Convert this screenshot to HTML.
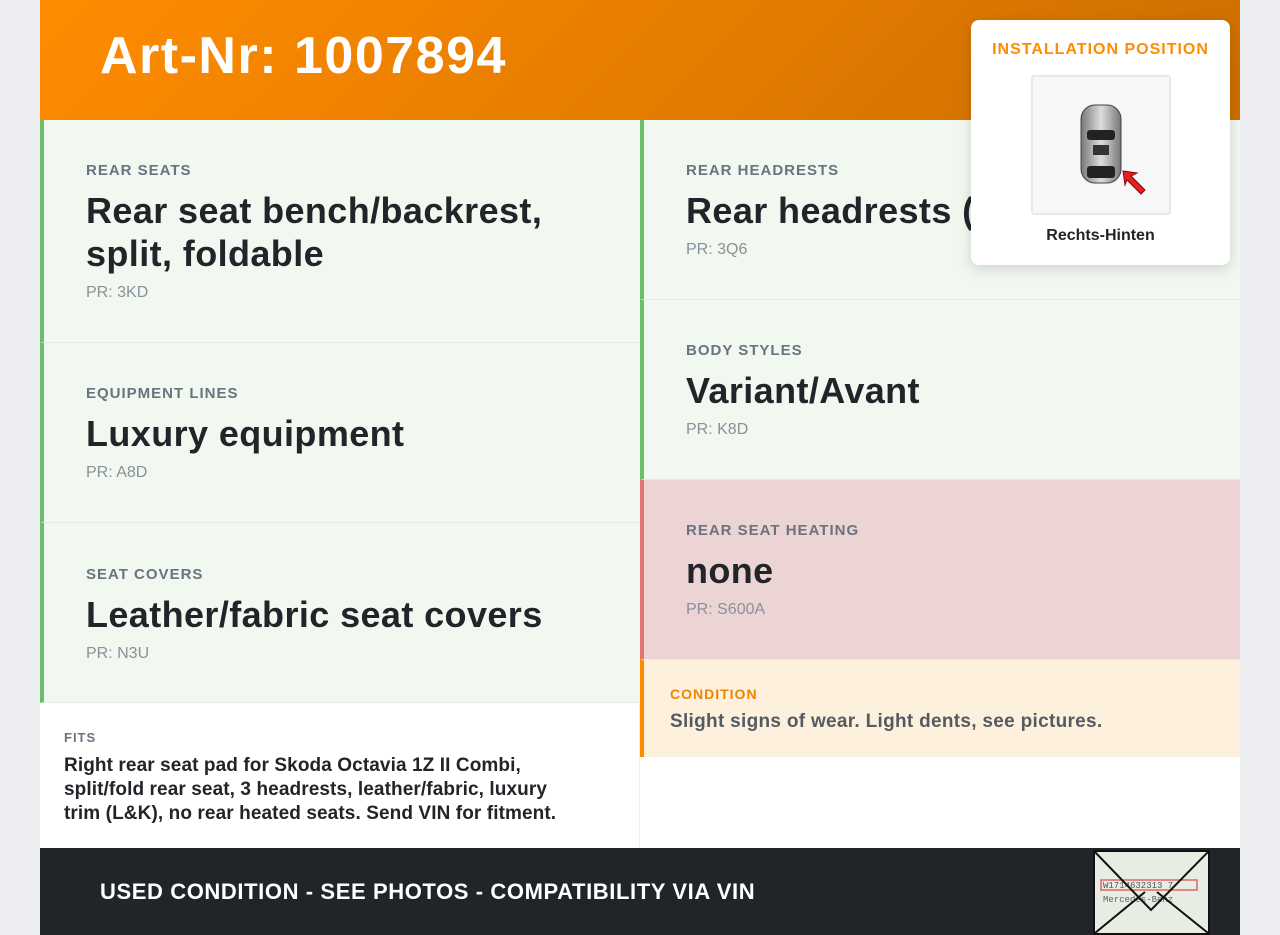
<!DOCTYPE html>
<html><head><meta charset="utf-8"><style>
*{box-sizing:border-box;margin:0;padding:0}
body{width:1280px;height:935px;background:#eceef1;font-family:"Liberation Sans",sans-serif;color:#212529;overflow:hidden;position:relative}
.wrap{position:absolute;left:40px;top:0;width:1200px;height:935px;background:#fff;overflow:hidden}
.hdr{height:120px;background:linear-gradient(135deg,#ff8c00,#cc6e00);padding-left:60px;color:#fff;font-size:52px;font-weight:bold;line-height:112px;letter-spacing:1.5px}
.cell{position:absolute;background:#f1f8f0;border-left:4px solid #6cbf6a;padding-left:42px;border-bottom:1px solid #e3ebe2}
.lbl{font-size:15px;letter-spacing:1px;color:#6b7280;font-weight:bold;text-transform:uppercase}
.ttl{font-size:36px;font-weight:bold;line-height:43px;margin-top:10px;color:#212529;letter-spacing:.4px}
.pr{font-size:16px;color:#8a9099;margin-top:9px}
.foot{position:absolute;left:0;top:848px;width:1200px;height:87px;background:#212529;color:#fff;font-size:22px;font-weight:bold;line-height:87px;padding-left:60px;letter-spacing:.6px}
.pop{position:absolute;left:971px;top:20px;width:259px;height:245px;background:#fff;border-radius:8px;box-shadow:0 4px 14px rgba(0,0,0,.15);text-align:center}
</style></head><body>
<div class="wrap">
<div class="hdr">Art-Nr: 1007894</div>
<div class="cell" style="left:0;top:120px;width:600px;height:223px;padding-top:42px"><div class="lbl">Rear seats</div><div class="ttl">Rear seat bench/backrest,<br>split, foldable</div><div class="pr">PR: 3KD</div></div>
<div class="cell" style="left:0;top:343px;width:600px;height:180px;padding-top:42px"><div class="lbl">Equipment lines</div><div class="ttl">Luxury equipment</div><div class="pr">PR: A8D</div></div>
<div class="cell" style="left:0;top:523px;width:600px;height:180px;padding-top:43px"><div class="lbl">Seat covers</div><div class="ttl">Leather/fabric seat covers</div><div class="pr">PR: N3U</div></div>
<div style="position:absolute;left:0;top:703px;width:600px;height:145px;padding:27px 24px;border-right:1px solid #eee"><div style="font-size:13px;letter-spacing:1px;color:#6b7280;font-weight:bold">FITS</div><div style="font-size:19px;font-weight:bold;line-height:24px;margin-top:9px;color:#212529;width:520px;letter-spacing:.1px">Right rear seat pad for Skoda Octavia 1Z II Combi, split/fold rear seat, 3 headrests, leather/fabric, luxury trim (L&amp;K), no rear heated seats. Send VIN for fitment.</div></div>
<div class="cell" style="left:600px;top:120px;width:600px;height:180px;padding-top:42px"><div class="lbl">Rear headrests</div><div class="ttl">Rear headrests (3)</div><div class="pr">PR: 3Q6</div></div>
<div class="cell" style="left:600px;top:300px;width:600px;height:180px;padding-top:42px"><div class="lbl">Body styles</div><div class="ttl">Variant/Avant</div><div class="pr">PR: K8D</div></div>
<div class="cell" style="left:600px;top:480px;width:600px;height:180px;padding-top:42px;background:#ecd4d4;border-left-color:#e57373"><div class="lbl">Rear seat heating</div><div class="ttl">none</div><div class="pr">PR: S600A</div></div>
<div class="cell" style="left:600px;top:660px;width:600px;height:97px;padding:26px 26px;background:#fdf0dc;border-left-color:#ff8c00;border-bottom:none"><div style="font-size:14px;letter-spacing:1px;color:#f08400;font-weight:bold">CONDITION</div><div style="font-size:19px;font-weight:bold;color:#555b62;margin-top:9px;letter-spacing:.3px">Slight signs of wear. Light dents, see pictures.</div></div>
<div class="foot">USED CONDITION - SEE PHOTOS - COMPATIBILITY VIA VIN</div>
<div style="position:absolute;left:1053px;top:850px;width:117px;height:85px;background:#e8ede4;border:2px solid #111">
<svg width="113" height="81" viewBox="0 0 113 81"><rect x="6" y="28" width="96" height="10" fill="none" stroke="#d66" stroke-width="1.5"/><text x="8" y="36" font-size="9" fill="#555" font-family="Liberation Mono">W1714632313 7</text><text x="8" y="50" font-size="9" fill="#666" font-family="Liberation Mono">Mercedes-Benz</text><path d="M0 0 L56 58 L113 0 M0 81 L50 40 M113 81 L62 40" stroke="#111" stroke-width="2" fill="none"/></svg></div>
</div>
<div class="pop">
<div style="font-size:16px;font-weight:bold;color:#ff8c00;letter-spacing:1px;margin-top:21px">INSTALLATION POSITION</div>
<div style="width:140px;height:140px;margin:16px auto 0;background:#f6f7f9;border:2px solid #e6e8eb;border-radius:3px;position:relative">
<svg width="140" height="140" viewBox="0 0 140 140" style="position:absolute;left:-2px;top:-2px"><defs><linearGradient id="g" x1="0" x2="1"><stop offset="0" stop-color="#777"/><stop offset=".5" stop-color="#ddd"/><stop offset="1" stop-color="#777"/></linearGradient></defs><rect x="50" y="30" width="40" height="78" rx="14" fill="url(#g)" stroke="#444"/><rect x="56" y="55" width="28" height="10" rx="3" fill="#222"/><rect x="62" y="70" width="16" height="10" fill="#333"/><rect x="56" y="91" width="28" height="12" rx="3" fill="#222"/><path d="M96 105 l14 14 l4 -4 l-14 -14 l6 -3 l-14 -2 l2 14z" fill="#d22" stroke="#900"/></svg></div>
<div style="font-size:16px;font-weight:bold;margin-top:12px;color:#212529">Rechts-Hinten</div>
</div>
</body></html>
